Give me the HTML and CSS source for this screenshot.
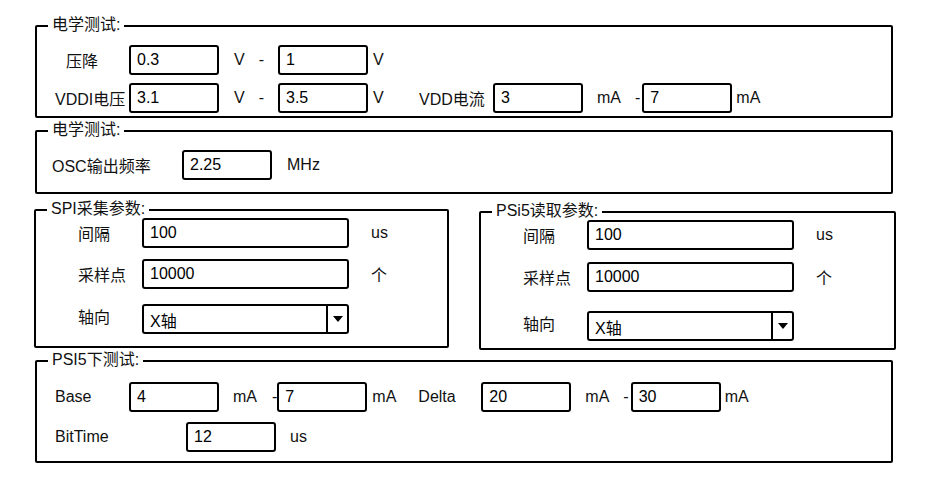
FILE: index.html
```html
<!DOCTYPE html>
<html lang="zh">
<head>
  <meta charset="UTF-8" />
  <title>测试参数</title>
  <link rel="stylesheet" href="styles.css">
</head>
<body>
  <div class="page">

    <!-- 电学测试 1 -->
    <div class="group wide sec-volt">
      <span class="group-title">电学测试:</span>
      <div class="body body-volt">
        <div class="row">
          <span class="lbl lbl-indent">压降</span>
          <input class="field" type="text" value="0.3">
          <span class="unit unit-v">V</span>
          <span class="dash dash-v">-</span>
          <input class="field" type="text" value="1">
          <span class="unit-end">V</span>
        </div>
        <div class="row">
          <span class="lbl">VDDI电压</span>
          <input class="field" type="text" value="3.1">
          <span class="unit unit-v">V</span>
          <span class="dash dash-v">-</span>
          <input class="field" type="text" value="3.5">
          <span class="unit-end">V</span>
          <span class="lbl">VDD电流</span>
          <input class="field" type="text" value="3">
          <span class="unit">mA</span>
          <span class="dash">-</span>
          <input class="field" type="text" value="7">
          <span class="unit-last">mA</span>
        </div>
      </div>
    </div>

    <!-- 电学测试 2 -->
    <div class="group wide sec-osc">
      <span class="group-title">电学测试:</span>
      <div class="body body-osc">
        <div class="row">
          <span class="lbl lbl-osc">OSC输出频率</span>
          <input class="field" type="text" value="2.25">
          <span class="unit unit-v">MHz</span>
        </div>
      </div>
    </div>

    <div class="panels">
      <!-- SPI -->
      <div class="group panel panel-spi">
        <span class="group-title">SPI采集参数:</span>
        <div class="body body-panel">
          <div class="row">
            <span class="lbl lbl-panel">间隔</span>
            <input class="field field-wide" type="text" value="100">
            <span class="unit unit-panel">us</span>
          </div>
          <div class="row row-mid">
            <span class="lbl lbl-panel">采样点</span>
            <input class="field field-wide" type="text" value="10000">
            <span class="unit unit-panel">个</span>
          </div>
          <div class="row row-last">
            <span class="lbl lbl-panel lbl-up">轴向</span>
            <div class="combo">
              <span class="combo-text">X轴</span>
              <span class="combo-btn"><span class="arrow"></span></span>
            </div>
          </div>
        </div>
      </div>

      <!-- PSI5 -->
      <div class="group panel panel-psi">
        <span class="group-title">PSi5读取参数:</span>
        <div class="body body-panel">
          <div class="row">
            <span class="lbl lbl-panel">间隔</span>
            <input class="field field-wide" type="text" value="100">
            <span class="unit unit-panel">us</span>
          </div>
          <div class="row row-mid-psi">
            <span class="lbl lbl-panel">采样点</span>
            <input class="field field-wide" type="text" value="10000">
            <span class="unit unit-panel">个</span>
          </div>
          <div class="row row-last-psi">
            <span class="lbl lbl-panel lbl-up">轴向</span>
            <div class="combo">
              <span class="combo-text">X轴</span>
              <span class="combo-btn"><span class="arrow"></span></span>
            </div>
          </div>
        </div>
      </div>
    </div>

    <!-- PSI5下测试 -->
    <div class="group wide sec-psi5">
      <span class="group-title">PSI5下测试:</span>
      <div class="body body-psi5">
        <div class="row">
          <span class="lbl">Base</span>
          <input class="field" type="text" value="4">
          <span class="unit">mA</span>
          <span class="dash dash-base">-</span>
          <input class="field" type="text" value="7">
          <span class="unit-end">mA</span>
          <span class="lbl lbl-delta">Delta</span>
          <input class="field" type="text" value="20">
          <span class="unit">mA</span>
          <span class="dash">-</span>
          <input class="field" type="text" value="30">
          <span class="unit-last">mA</span>
        </div>
        <div class="row row-bit">
          <span class="lbl lbl-bit">BitTime</span>
          <input class="field" type="text" value="12">
          <span class="unit">us</span>
        </div>
      </div>
    </div>

  </div>
</body>
</html>
```
FILE: styles.css
```css
body {
  margin: 0;
  font-family: "Liberation Sans", "Noto Sans CJK SC", sans-serif;
  font-size: 16px;
  color: #111;
  background-color: #fff;
}

.page {
  width: 936px;
  padding-top: 25px;
}

/* group boxes */
.group {
  position: relative;
  box-sizing: border-box;
  border: 2px solid #000;
  border-radius: 2px;
}

.group-title {
  position: absolute;
  top: -11px;
  left: 11px;
  padding: 0 4px;
  background-color: #fff;
  line-height: 18px;
  font-size: 16px;
}

.wide {
  margin-left: 35px;
  width: 858px;
}

.sec-volt {
  height: 93px;
}

.sec-osc {
  height: 64px;
  margin-top: 12px;
}

.panels {
  display: flex;
  margin-top: 15px;
}

.panel {
  height: 139px;
}

.panel-spi {
  margin-left: 34px;
  width: 415px;
}

.panel-psi {
  margin-left: 30px;
  margin-top: 2px;
  width: 417px;
}

.sec-psi5 {
  height: 103px;
  margin-top: 10px;
}

/* rows */
.body-volt {
  padding: 18px 0 0 18px;
}

.body-volt .row + .row {
  margin-top: 8px;
}

.body-osc {
  padding: 18px 0 0 15px;
}

.body-panel {
  padding: 7px 0 0 42px;
}

.body-psi5 {
  padding: 20px 0 0 18px;
}

.row {
  display: flex;
  align-items: center;
  height: 30px;
  white-space: nowrap;
}

.row-mid {
  margin-top: 11px;
}

.row-last {
  margin-top: 15px;
}

.row-mid-psi {
  margin-top: 12px;
}

.row-last-psi {
  margin-top: 19px;
}

.row-bit {
  margin-top: 10px;
}

/* labels */
.lbl {
  width: 74px;
  flex-shrink: 0;
  box-sizing: border-box;
}

.lbl-indent {
  padding-left: 11px;
}

.lbl-osc {
  width: 130px;
}

.lbl-panel {
  width: 64px;
}

.lbl-up {
  margin-bottom: 6px;
}

.lbl-delta {
  width: 63px;
}

.lbl-bit {
  width: 131px;
}

/* inputs */
.field {
  width: 90px;
  height: 30px;
  box-sizing: border-box;
  margin: 0;
  padding: 0 0 0 6px;
  border: 2px solid #000;
  border-radius: 3px;
  background-color: #fff;
  font-family: "Liberation Sans", "Noto Sans CJK SC", sans-serif;
  font-size: 16px;
  color: #000;
  outline: none;
}

.field-wide {
  width: 207px;
}

.unit {
  margin-left: 14px;
}

.unit-v {
  margin-left: 15px;
}

.unit-panel {
  margin-left: 22px;
}

.dash {
  margin-left: 14px;
  margin-right: 2px;
}

.dash-v {
  margin-right: 14px;
}

.dash-base {
  margin-left: 15px;
  margin-right: 0;
}

.unit-end {
  width: 46px;
  margin-left: 5px;
}

.unit-last {
  margin-left: 4px;
}

/* dropdown */
.combo {
  display: flex;
  width: 207px;
  height: 30px;
  box-sizing: border-box;
  border: 2px solid #000;
  border-radius: 3px;
  font-size: 16px;
  color: #000;
}

.combo-text {
  flex: 1;
  padding-left: 6px;
  line-height: 28px;
  padding-top: 2px;
}

.combo-btn {
  display: flex;
  align-items: center;
  justify-content: center;
  width: 19px;
  border-left: 2px solid #000;
}

.arrow {
  width: 0;
  height: 0;
  border-left: 5px solid transparent;
  border-right: 5px solid transparent;
  border-top: 6px solid #000;
}
```
